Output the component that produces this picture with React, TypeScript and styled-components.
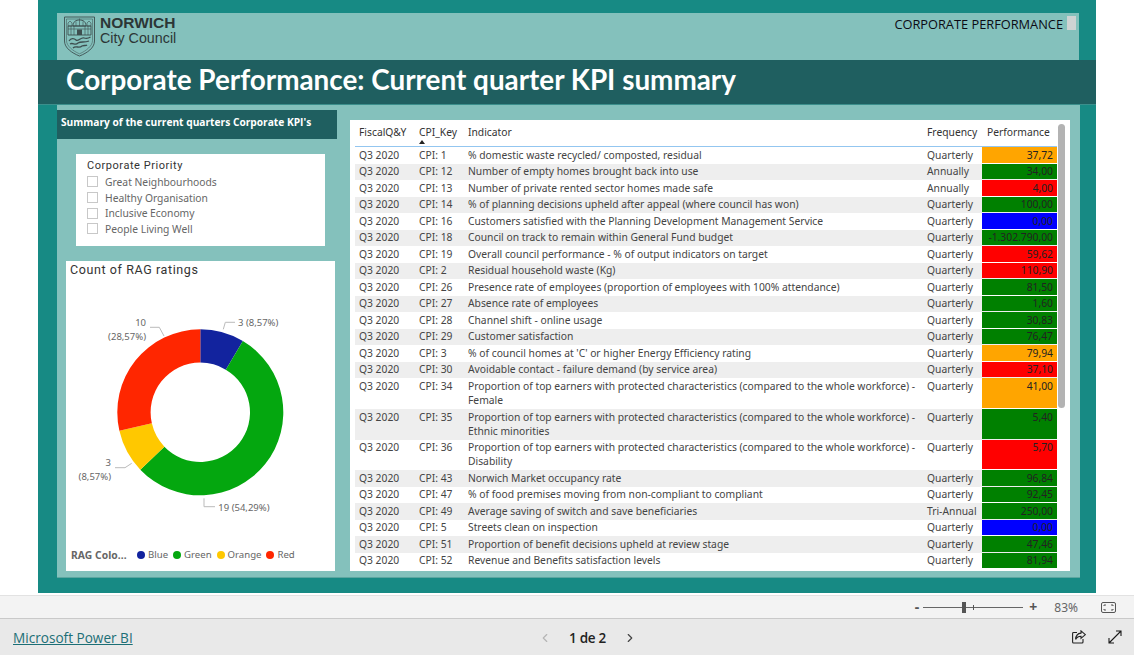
import React from "react";
import styled, { createGlobalStyle } from "styled-components";
import { ChevronLeft, ChevronRight } from "lucide-react";

const Global = createGlobalStyle`
  html, body { margin: 0; padding: 0; background: #fff; overflow: hidden; }
  #root { width: 1134px; height: 655px; }
  * { box-sizing: border-box; }
`;

const Page = styled.div`
  width: 1134px;
  height: 655px;
  display: flex;
  flex-direction: column;
  font-family: "Noto Sans", "Open Sans", sans-serif;
`;
const Stage = styled.div`
  height: 595px;
  padding-left: 38px;
`;
const Report = styled.main`
  width: 1058px;
  height: 593px;
  background: #178a84;
  padding-top: 13px;
`;
const HeaderPanel = styled.header`
  margin-left: 19px;
  width: 1022px;
  height: 47px;
  background: #84c1bc;
  display: flex;
  justify-content: space-between;
  padding: 2px 3px 0 6px;
`;
const Logo = styled.div`
  display: flex;
  gap: 4px;
`;
const LogoWords = styled.div`
  display: flex;
  flex-direction: column;
  padding-top: 1px;
  font-family: "Liberation Sans", sans-serif;
  color: #2c3636;
  line-height: 14.5px;
`;
const LogoStrong = styled.span`
  font-size: 15.5px;
  font-weight: 700;
`;
const LogoLight = styled.span`
  font-size: 14.3px;
`;
const PageTag = styled.div`
  display: flex;
  align-items: flex-start;
  gap: 4px;
  font-family: "Open Sans", sans-serif;
  font-size: 12.8px;
  line-height: 18px;
  color: #0b0b14;
`;
const TagBox = styled.span`
  width: 9px;
  height: 14px;
  margin-top: 1px;
  background: #cfd3d3;
`;
const TitleBand = styled.div`
  height: 45px;
  background: #1f5f60;
  padding-left: 28px;
  border-bottom: 1px solid #3b8f8c;
  color: #fff;
  font-family: "Lato", sans-serif;
  font-weight: 700;
  font-size: 27.85px;
  line-height: 40px;
`;
const Body = styled.div`
  margin-left: 19px;
  width: 1023px;
  height: 473px;
  margin-top: 0;
  background: #84c1bc;
  border-bottom: 1px solid #5da6a0;
  padding: 5px 10px 0 0;
  display: flex;
  gap: 13px;
`;
const LeftColumn = styled.div`
  width: 280px;
  display: flex;
  flex-direction: column;
`;
const SummaryBox = styled.div`
  height: 29px;
  background: #1f5f60;
  color: #fff;
  padding-left: 4px;
  font-family: "Open Sans", sans-serif;
  font-weight: 700;
  font-size: 10.2px;
  line-height: 25px;
`;
const Slicer = styled.section`
  margin: 15px 0 0 19px;
  width: 249px;
  height: 92px;
  background: #fff;
  padding: 5px 11px;
`;
const SlicerTitle = styled.div`
  font-size: 11px;
  line-height: 14px;
  color: #333;
  font-family: "Roboto", sans-serif;
  letter-spacing: 0.55px;
  margin-bottom: 1px;
`;
const SlicerRow = styled.div`
  display: flex;
  align-items: center;
  gap: 7px;
  height: 15.7px;
  font-size: 10.3px;
  color: #666;
`;
const Check = styled.span`
  width: 11px;
  height: 11px;
  border: 1px solid #c8c8c8;
  background: #fff;
`;
const ChartCard = styled.section`
  margin: 15px 0 0 9px;
  width: 269px;
  height: 310px;
  background: #fff;
  display: flex;
  flex-direction: column;
`;
const ChartTitle = styled.div`
  height: 29px;
  padding: 1px 0 0 4px;
  font-family: "Roboto", sans-serif;
  font-size: 12.5px;
  line-height: 16px;
  letter-spacing: 0.6px;
  color: #333;
`;
const ChartSvg = styled.svg`
  display: block;
  width: 269px;
  height: 250px;
  font-family: "Noto Sans", sans-serif;
  font-size: 9.5px;
  fill: #666;
`;
const Legend = styled.div`
  display: flex;
  align-items: center;
  padding: 8px 0 0 5px;
  font-size: 9.6px;
  line-height: 14px;
  color: #666;
`;
const LegendTitle = styled.span`
  font-size: 10.3px;
  font-weight: 700;
  letter-spacing: 0.05px;
  margin-right: 7px;
  width: 59px;
  white-space: nowrap;
`;
const LegendItem = styled.span`
  display: flex;
  align-items: center;
  gap: 3px;
  margin-right: 5px;
`;
const Dot = styled.i<{ $c: string }>`
  width: 8px;
  height: 8px;
  border-radius: 50%;
  background: ${(p) => p.$c};
`;
const TableCard = styled.section`
  position: relative;
  margin-top: 10px;
  width: 720px;
  height: 451px;
  background: #fff;
  padding-left: 5px;
  font-size: 10.3px;
  color: #444;
`;
const HeadRow = styled.div`
  width: 702px;
  height: 27px;
  display: flex;
  border-bottom: 1.5px solid #93c6f0;
  position: relative;
  color: #333;
  line-height: 14px;
  padding-top: 4px;
`;
const SortCaret = styled.span`
  position: absolute;
  left: 64px;
  top: 20px;
  width: 0;
  height: 0;
  border-left: 3.5px solid transparent;
  border-right: 3.5px solid transparent;
  border-bottom: 4px solid #222;
`;
const Rows = styled.div`
  height: 423px;
  overflow: hidden;
`;
const Row = styled.div<{ $tall: number; $odd: boolean }>`
  width: 702px;
  height: ${(p) => p.$tall}px;
  display: flex;
  background: ${(p) => (p.$odd ? "#eeeeee" : "#fff")};
  line-height: 14px;
`;
const Col = styled.div<{ $w: number }>`
  width: ${(p) => p.$w}px;
  flex: none;
  padding: 0.5px 0 0 4px;
  white-space: pre-line;
`;
const PerfHead = styled.div`
  width: 75px;
  padding: 0.5px 0 0 5px;
`;
const Perf = styled.div<{ $c: string }>`
  width: 75px;
  flex: none;
  margin-bottom: 1px;
  background: ${(p) => p.$c};
  color: #222;
  text-align: right;
  padding: 0.5px 4px 0 0;
`;
const Thumb = styled.div`
  position: absolute;
  left: 708px;
  top: 4px;
  width: 7px;
  height: 284px;
  border-radius: 4px;
  background: #b3b3b3;
`;
const ZoomBar = styled.div`
  height: 24px;
  background: #f3f3f3;
  border-top: 1px solid #e2e2e2;
  border-bottom: 1px solid #c9c9c9;
  display: flex;
  align-items: center;
  justify-content: flex-end;
  padding-right: 18px;
  color: #666;
`;
const ZoomSign = styled.span`
  font-size: 14px;
  line-height: 14px;
  font-weight: 700;
  color: #555;
`;
const Slider = styled.div`
  position: relative;
  width: 100px;
  height: 1px;
  background: #666;
  margin: 0 6px 0 4px;
`;
const SliderThumb = styled.span`
  position: absolute;
  left: 39px;
  top: -5px;
  width: 4px;
  height: 11px;
  background: #555;
`;
const SliderTick = styled.span`
  position: absolute;
  left: 50px;
  top: -2px;
  width: 1px;
  height: 5px;
  background: #555;
`;
const ZoomValue = styled.span`
  font-size: 12px;
  margin: 0 23px 0 17px;
  color: #666;
`;
const FooterBar = styled.footer`
  flex: 1;
  background: #e9e9e9;
  display: flex;
  align-items: center;
  padding: 0 12px 0 13px;
  position: relative;
`;
const BrandLink = styled.a`
  font-size: 13.6px;
  line-height: 20px;
  padding-top: 1px;
  color: #1c6f76;
  text-decoration: underline;
  font-family: "Open Sans", sans-serif;
`;
const Pager = styled.nav`
  position: absolute;
  left: 538px;
  top: 10px;
  display: flex;
  align-items: center;
  color: #222;
  font-size: 13.5px;
  font-weight: 500;
  line-height: 18px;
`;
const PagerText = styled.span`
  margin: 0 17px 0 17px;
  font-family: "Open Sans", sans-serif;
  font-weight: 600;
  letter-spacing: -0.3px;
`;
const FootIcons = styled.div`
  margin-left: auto;
  display: flex;
  gap: 22px;
  align-items: center;
`;

const O = "#ffa500", G = "#008000", R = "#ff0000", B = "#0000ff";
const Q = "Quarterly";
const LONG = "Proportion of top earners with protected characteristics (compared to the whole workforce) -\n";
type D = [string, string, string, string, string, number?];
const data: D[] = [
  ["1", "% domestic waste recycled/ composted, residual", Q, "37,72", O],
  ["12", "Number of empty homes brought back into use", "Annually", "34,00", G],
  ["13", "Number of private rented sector homes made safe", "Annually", "4,00", R],
  ["14", "% of planning decisions upheld after appeal (where council has won)", Q, "100,00", G],
  ["16", "Customers satisfied with the Planning Development Management Service", Q, "0,00", B],
  ["18", "Council on track to remain within General Fund budget", Q, "-1.302.790,00", G],
  ["19", "Overall council performance - % of output indicators on target", Q, "59,62", R],
  ["2", "Residual household waste (Kg)", Q, "110,90", R],
  ["26", "Presence rate of employees (proportion of employees with 100% attendance)", Q, "81,50", G],
  ["27", "Absence rate of employees", Q, "1,60", G],
  ["28", "Channel shift - online usage", Q, "30,83", G],
  ["29", "Customer satisfaction", Q, "76,47", G],
  ["3", "% of council homes at 'C' or higher Energy Efficiency rating", Q, "79,94", O],
  ["30", "Avoidable contact - failure demand (by service area)", Q, "37,10", R],
  ["34", LONG + "Female", Q, "41,00", O, 31],
  ["35", LONG + "Ethnic minorities", Q, "5,40", G, 30.5],
  ["36", LONG + "Disability", Q, "5,70", R, 30.5],
  ["43", "Norwich Market occupancy rate", Q, "96,84", G],
  ["47", "% of food premises moving from non-compliant to compliant", Q, "92,45", G],
  ["49", "Average saving of switch and save beneficiaries", "Tri-Annual", "250,00", G],
  ["5", "Streets clean on inspection", Q, "0,00", B],
  ["51", "Proportion of benefit decisions upheld at review stage", Q, "47,46", G],
  ["52", "Revenue and Benefits satisfaction levels", Q, "81,94", G],
];

const slices = [
  { v: 3, c: "#12239e" },
  { v: 19, c: "#04a70f" },
  { v: 3, c: "#ffc800" },
  { v: 10, c: "#ff2600" },
];
const CX = 200.3, CY = 412.3, RO = 83, RI = 49.7;
const pt = (r: number, a: number) => {
  const t = (a * Math.PI) / 180;
  return `${(CX + r * Math.sin(t)).toFixed(2)} ${(CY - r * Math.cos(t)).toFixed(2)}`;
};
const arc = (from: number, to: number) => {
  const large = to - from > 180 ? 1 : 0;
  return `M${pt(RO, from)} A${RO} ${RO} 0 ${large} 1 ${pt(RO, to)} L${pt(RI, to)} A${RI} ${RI} 0 ${large} 0 ${pt(RI, from)} Z`;
};
let acc = 0;
const arcs = slices.map((s) => {
  const from = acc;
  acc += (s.v / 35) * 360;
  return { d: arc(from, acc), c: s.c };
});

const Crest = () => (
  <svg width="33" height="42" viewBox="0 0 33 42" fill="none" stroke="#3d4e4f" strokeWidth="0.9">
    <path d="M1.5 2 H31.5 V26 C31.5 33 24 38 16.5 41 C9 38 1.5 33 1.5 26 Z" />
    <path d="M3.5 4 H29.5 V25.5 C29.5 31 23 36 16.5 38.8 C10 36 3.5 31 3.5 25.5 Z" strokeWidth="0.5" />
    <path d="M10 11 C10 6.5 13 5 16.5 5 C20 5 23 6.5 23 11 Z" />
    <path d="M16.5 3.5 V5 M13 6.5 V11 M16.5 5 V11 M20 6.5 V11" strokeWidth="0.6" />
    <path d="M5 11 H28 V20 H5 Z" />
    <path d="M5 14 H28 M8 11 V20 M11 11 V20 M22 11 V20 M25 11 V20" strokeWidth="0.6" />
    <path d="M5 8 L7 6 L9 8 V11 H5 Z M24 8 L26 6 L28 8 V11 H24 Z" strokeWidth="0.6" />
    <rect x="14" y="14.5" width="5" height="5.5" fill="#3d4e4f" stroke="none" />
    <path d="M6 26 C8 23 11 23 13 25 C15 27 18 22 21 23 C24 24 26 23 27.5 22 M7 29 C10 27 12 31 15 28 C18 26 21 28 26 26 M10 33 C13 30 16 34 19 31 C21 30 23 31 24 30" strokeWidth="1.3" />
  </svg>
);

const FitIcon = () => (
  <svg width="15" height="11" viewBox="0 0 15 11" fill="none" stroke="#555" strokeWidth="1">
    <rect x="0.5" y="0.5" width="14" height="10" rx="1.5" />
    <path d="M3 4 V3 H5 M10 3 H12 V4 M12 7 V8 H10 M5 8 H3 V7" />
  </svg>
);
const ShareIcon = () => (
  <svg width="14" height="14" viewBox="0 0 14 14" fill="none" stroke="#222" strokeWidth="1.1">
    <path d="M5 2.5 H1.5 C1 2.5 .6 2.9 .6 3.4 V12 C.6 12.6 1 13 1.5 13 H10 C10.6 13 11 12.6 11 12 V9" />
    <path d="M9 .8 L13.4 4.6 L9 8.4 V6.2 C6.5 6.2 4.8 7.2 3.6 9.4 C3.8 5.8 5.8 3.4 9 3.1 Z" />
  </svg>
);
const ExpandIcon = () => (
  <svg width="14" height="14" viewBox="0 0 14 14" fill="none" stroke="#1a1a1a" strokeWidth="1.1">
    <path d="M1 13 L13 1 M8 1 H13 V6 M1 8 V13 H6" />
  </svg>
);

export default function App() {
  return (
    <Page>
      <Global />
      <Stage>
        <Report>
          <HeaderPanel>
            <Logo>
              <Crest />
              <LogoWords>
                <LogoStrong>NORWICH</LogoStrong>
                <LogoLight>City Council</LogoLight>
              </LogoWords>
            </Logo>
            <PageTag>
              CORPORATE PERFORMANCE
              <TagBox />
            </PageTag>
          </HeaderPanel>
          <TitleBand>Corporate Performance: Current quarter KPI summary</TitleBand>
          <Body>
            <LeftColumn>
              <SummaryBox>Summary of the current quarters Corporate KPI's</SummaryBox>
              <Slicer>
                <SlicerTitle>Corporate Priority</SlicerTitle>
                {["Great Neighbourhoods", "Healthy Organisation", "Inclusive Economy", "People Living Well"].map((t) => (
                  <SlicerRow key={t}>
                    <Check />
                    {t}
                  </SlicerRow>
                ))}
              </Slicer>
              <ChartCard>
                <ChartTitle>Count of RAG ratings</ChartTitle>
                <ChartSvg viewBox="66 290 269 250">
                  {arcs.map((a) => (
                    <path key={a.c} d={a.d} fill={a.c} />
                  ))}
                  <g fill="none" stroke="#bbb" strokeWidth="1">
                    <polyline points="223.3,329.3 225.3,322.3 235,322.3" />
                    <polyline points="150,327.3 159.3,327.3 164,336" />
                    <polyline points="115,467.7 125,467.7 131.7,463.3" />
                    <polyline points="204,498.3 204,506.7 215,506.7" />
                  </g>
                  <text x="238" y="326">3 (8,57%)</text>
                  <text x="146" y="326" textAnchor="end">10</text>
                  <text x="146" y="340" textAnchor="end">(28,57%)</text>
                  <text x="111" y="465.5" textAnchor="end">3</text>
                  <text x="111" y="479.5" textAnchor="end">(8,57%)</text>
                  <text x="218.3" y="510.5">19 (54,29%)</text>
                </ChartSvg>
                <Legend>
                  <LegendTitle>RAG Colo...</LegendTitle>
                  {[["Blue", "#12239e"], ["Green", "#04a70f"], ["Orange", "#ffc800"], ["Red", "#ff2600"]].map(([t, c]) => (
                    <LegendItem key={t}>
                      <Dot $c={c} />
                      {t}
                    </LegendItem>
                  ))}
                </Legend>
              </ChartCard>
            </LeftColumn>
            <TableCard>
              <HeadRow>
                <Col $w={60}>FiscalQ&amp;Y</Col>
                <Col $w={49}>CPI_Key</Col>
                <Col $w={459}>Indicator</Col>
                <Col $w={59}>Frequency</Col>
                <PerfHead>Performance</PerfHead>
                <SortCaret />
              </HeadRow>
              <Rows>
                {data.map((d, i) => (
                  <Row key={d[0]} $tall={d[5] ?? 16.5} $odd={i % 2 === 1}>
                    <Col $w={60}>Q3 2020</Col>
                    <Col $w={49}>CPI: {d[0]}</Col>
                    <Col $w={459}>{d[1]}</Col>
                    <Col $w={59}>{d[2]}</Col>
                    <Perf $c={d[4]}>{d[3]}</Perf>
                  </Row>
                ))}
              </Rows>
              <Thumb />
            </TableCard>
          </Body>
        </Report>
      </Stage>
      <ZoomBar>
        <ZoomSign>-</ZoomSign>
        <Slider>
          <SliderThumb />
          <SliderTick />
        </Slider>
        <ZoomSign>+</ZoomSign>
        <ZoomValue>83%</ZoomValue>
        <FitIcon />
      </ZoomBar>
      <FooterBar>
        <BrandLink href="#">Microsoft Power BI</BrandLink>
        <Pager>
          <ChevronLeft size={14} color="#b5b5b5" />
          <PagerText>1 de 2</PagerText>
          <ChevronRight size={14} color="#444" />
        </Pager>
        <FootIcons>
          <ShareIcon />
          <ExpandIcon />
        </FootIcons>
      </FooterBar>
    </Page>
  );
}
